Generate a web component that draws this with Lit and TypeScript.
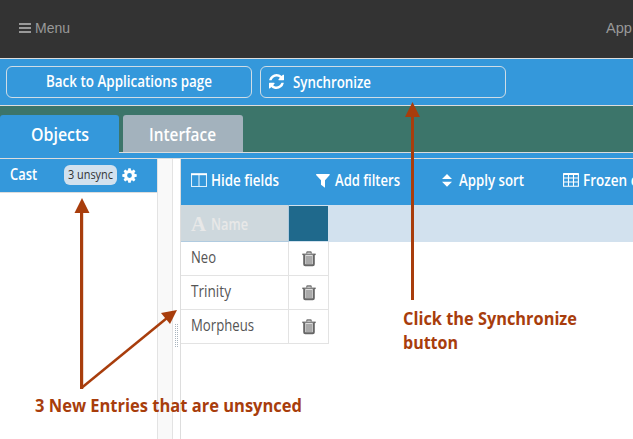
import { LitElement, html, svg, css } from "lit";
import { customElement, property } from "lit/decorators.js";

/* One line of text set to a fixed measure; baseline sits 15px below the top. */
@customElement("fit-label")
class FitLabel extends LitElement {
  @property() text = "";
  @property({ type: Number }) w = 50;
  static styles = css`
    :host { display: block; flex: none; height: 20px; }
    svg { display: block; overflow: visible; }
    text { fill: currentColor; white-space: pre; }
  `;
  render() {
    return html`<svg width=${this.w} height="20">
      <text x="0" y="15" textLength=${this.w} lengthAdjust="spacingAndGlyphs">${this.text}</text>
    </svg>`;
  }
}

const trash = html`<svg width="14" height="16" viewBox="0 0 14 16">
  <path d="M4.500 2.500 5.200 1h3.600l.7 1.500" fill="none" stroke="#777" stroke-width="1.300"/>
  <path d="M.3 2.600h13.400v1.500H.3z" fill="#666"/>
  <path d="M2.200 3.800v9.400q0 1 1 1h7.600q1 0 1-1V3.800" fill="#ddd" stroke="#666" stroke-width="2"/>
  <path d="M5 5v8M7 5v8M9 5v8" stroke="#777" stroke-width="1"/>
</svg>`;

@customElement("app-root")
class AppRoot extends LitElement {
  static styles = css`
    :host { display: block; position: relative; width: 633px; height: 439px; overflow: hidden; background: #fff;
      font-family: "Open Sans", "Noto Sans", sans-serif; font-size: 15.500px; }
    * { box-sizing: border-box; }
    svg { display: block; flex: none; }
    .top { height: 59px; background: #333; border-bottom: 1px solid #ddd; display: flex; justify-content: space-between;
      padding: 18px 1px 0 19px; color: #999; font: 15px "Liberation Sans", Arial, sans-serif; }
    .top fit-label { -webkit-text-stroke: .5px #999; }
    .menu { display: flex; gap: 4px; }
    .menu svg { margin-top: 5px; }
    .actions { height: 47px; background: #3498db; border-bottom: 1px solid #ddd; display: flex; gap: 8px; padding: 7px 6px; color: #fff; font-weight: 600; }
    .btn { width: 246px; height: 32px; border: 1px solid #cfdde6; border-radius: 6px; display: flex; padding-top: 5px; }
    .btn.back { padding-left: 39px; }
    .btn.sync { padding-left: 8px; gap: 9px; padding-top: 6px; }
    .btn.sync svg { margin-top: 1px; }
    .tabs { height: 47px; background: #3c756a; border-bottom: 1px solid #ddd; display: flex; gap: 4px; padding-top: 9px; color: #fff; font-weight: 600; font-size: 18.500px; }
    .tab { border-radius: 3px 3px 0 0; padding-top: 11px; height: 37px; }
    .tab.on { width: 119px; height: 38px; background: #3498db; padding-left: 31px; }
    .tab.off { width: 120px; background: #a3b2bd; padding-left: 26px; }
    .strip { height: 6px; background: #3498db; border-bottom: 1px solid #ddd; }
    .main { display: flex; height: 280px; }
    .side { width: 157px; }
    .cast { height: 34px; background: #3498db; border-bottom: 1px solid #ddd; display: flex; padding-left: 10px; color: #fff; font-weight: 600; }
    .cast > fit-label { margin-top: 6px; }
    .badge { width: 53px; height: 20px; margin: 6px 0 0 27px; border-radius: 6px; background: #d2e1ee; color: #333; font-weight: 400; font-size: 12px; padding-left: 4px; }
    .badge fit-label { margin-top: -1px; }
    .cast > svg { margin: 9px 0 0 5px; }
    .scroll { width: 16px; background: #f9f9f9; border: solid #e3e3e3; border-width: 0 1px; }
    .split { width: 8px; border-right: 1px solid #ddd; padding: 165px 0 0 2px; }
    .grid { flex: 1; min-width: 0; }
    .tools { height: 46px; background: #3498db; display: flex; color: #fff; font-weight: 600; font-size: 15.500px; padding: 12px 0 0 10px; }
    .tool { display: flex; }
    .head { height: 37px; display: flex; background: #d2e1ee; border-bottom: 1px solid #d2e1ee; }
    .name { width: 108px; height: 37px; background: #ced8dd; border: solid #b0cbe0; border-width: 0 1px 1px 0; padding: 10px 0 0 10px; display: flex; gap: 5px; color: #e8e8e8; font-weight: 600; }
    .name .a { font: bold 22px "Liberation Serif", serif; margin-top: 1px; }
    .dark { width: 39px; height: 35px; margin-top: 1px; background: #1f698c; }
    .row { width: 148px; height: 34px; display: flex; border: solid #e3e3e3; border-width: 0 1px 1px 0; color: #555; }
    .cell { width: 108px; border-right: 1px solid #e3e3e3; padding: 6px 0 0 10px; }
    .cell fit-label { -webkit-text-stroke: .15px #555; }
    .bin { padding: 9px 0 0 13px; }
    .over { position: absolute; left: 0; top: 0; }
    .note { position: absolute; color: #a83d0c; font: bold 17px "Open Sans", sans-serif; }
    .n1 { left: 35px; top: 397px; }
    .n2 { left: 403px; top: 310px; }
    .n2 fit-label { height: 24px; }
  `;
  render() {
    const teeth = [0, 45, 90, 135, 180, 225, 270, 315];
    const rows: [string, number][] = [["Neo", 25], ["Trinity", 40], ["Morpheus", 63]];
    const dots = [0, 1, 2, 3, 4, 5, 6, 7, 8, 9, 10, 11];
    return html`
      <div class="top">
        <div class="menu">
          <svg width="12" height="10"><path d="M0 1h12M0 5h12M0 9h12" stroke="#999" stroke-width="2"/></svg>
          <fit-label text="Menu" w="35"></fit-label>
        </div>
        <fit-label text="App" w="26"></fit-label>
      </div>
      <div class="actions">
        <div class="btn back"><fit-label text="Back to Applications page" w="166"></fit-label></div>
        <div class="btn sync">
          <svg width="15" height="15" viewBox="0 0 1536 1536"><path fill="#fff" d="M1511 928q0 5-1 7-64 268-268 434.500T764 1536q-146 0-282.500-55T238 1324l-129 129q-19 19-45 19t-45-19-19-45V960q0-26 19-45t45-19h448q26 0 45 19t19 45-19 45l-137 137q71 66 161 102t187 36q134 0 250-65t186-179q11-17 53-117 8-23 30-23h192q13 0 22.500 9.500t9.500 22.500zm25-800v448q0 26-19 45t-45 19h-448q-26 0-45-19t-19-45 19-45l138-138Q969 256 768 256q-134 0-250 65T332 500q-11 17-53 117-8 23-30 23H50q-13 0-22.500-9.500T18 608v-7q65-268 270-434.500T768 0q146 0 284 55.500T1297 212l130-129q19-19 45-19t45 19 19 45z"/></svg>
          <fit-label text="Synchronize" w="78"></fit-label>
        </div>
      </div>
      <div class="tabs">
        <div class="tab on"><fit-label text="Objects" w="58"></fit-label></div>
        <div class="tab off"><fit-label text="Interface" w="67"></fit-label></div>
      </div>
      <div class="strip"></div>
      <div class="main">
        <div class="side">
          <div class="cast">
            <fit-label text="Cast" w="27"></fit-label>
            <div class="badge"><fit-label text="3 unsync" w="45"></fit-label></div>
            <svg width="15" height="15" viewBox="-7.500 -7.500 15 15">
              ${teeth.map((a) => svg`<path d="M-1.800-4-1.200-7.200H1.200L1.800-4z" fill="#fff" transform="rotate(${a})"/>`)}
              <circle r="3.900" fill="none" stroke="#fff" stroke-width="3"/>
            </svg>
          </div>
        </div>
        <div class="scroll"></div>
        <div class="split">
          <svg width="4" height="24">${dots.map((i) => svg`<path d="M0 ${i * 2 + 0.5}h1m1 0h1" stroke="#a9b5be"/>`)}</svg>
        </div>
        <div class="grid">
          <div class="tools">
            <svg width="16" height="15" style="margin:2px 4px 0 0"><path d="M.5 1.500h15v12H.5zM8 1.500v12" fill="none" stroke="#fff" stroke-width="1.100" opacity=".85"/><path d="M0 1.200h16" stroke="#fff" stroke-width="2"/></svg>
            <fit-label text="Hide fields" w="68"></fit-label>
            <svg width="14" height="15" style="margin:3px 5px 0 37px"><path d="M.3 0h13.200q.5.600 0 1.200L9 6.300v7.500L5 10.800V6.300L.3 1.200Q-.1.600.3 0z" fill="#fff"/></svg>
            <fit-label text="Add filters" w="65"></fit-label>
            <svg width="10" height="13" style="margin:3px 7px 0 42px"><path d="M5 0 10 5H0zM0 7.800h10L5 12.800z" fill="#fff"/></svg>
            <fit-label text="Apply sort" w="65"></fit-label>
            <svg width="16" height="14" style="margin:2px 4px 0 39px"><path d="M.6 1h14.800v12.200H.6zM.6 5h14.800M.6 9h14.800M5.500 1v12M10.500 1v12" fill="none" stroke="#fff" stroke-width="1.100"/><path d="M.3 1h15.400" stroke="#fff" stroke-width="2"/></svg>
            <fit-label text="Frozen columns" w="103"></fit-label>
          </div>
          <div class="head">
            <div class="name"><fit-label class="a" text="A" w="15"></fit-label><fit-label text="Name" w="37"></fit-label></div>
            <div class="dark"></div>
          </div>
          ${rows.map(([n, w]) => html`<div class="row">
            <div class="cell"><fit-label text=${n} w=${w}></fit-label></div>
            <div class="bin">${trash}</div>
          </div>`)}
        </div>
      </div>
      <svg class="over" width="633" height="439">
        <g fill="#a83d0c">
          <path d="M412.500 102l7.500 15h-15zM411 116h3v184h-3zM82 198l7.500 15h-15zM80 212h3.200v177H80z"/>
          <path d="M177 310l-7 14-9-11z"/>
        </g>
        <path d="M82 387.500 167 318" stroke="#a83d0c" stroke-width="2.500"/>
      </svg>
      <div class="note n1"><fit-label text="3 New Entries that are unsynced" w="267"></fit-label></div>
      <div class="note n2"><fit-label text="Click the Synchronize" w="174"></fit-label><fit-label text="button" w="55"></fit-label></div>
    `;
  }
}
